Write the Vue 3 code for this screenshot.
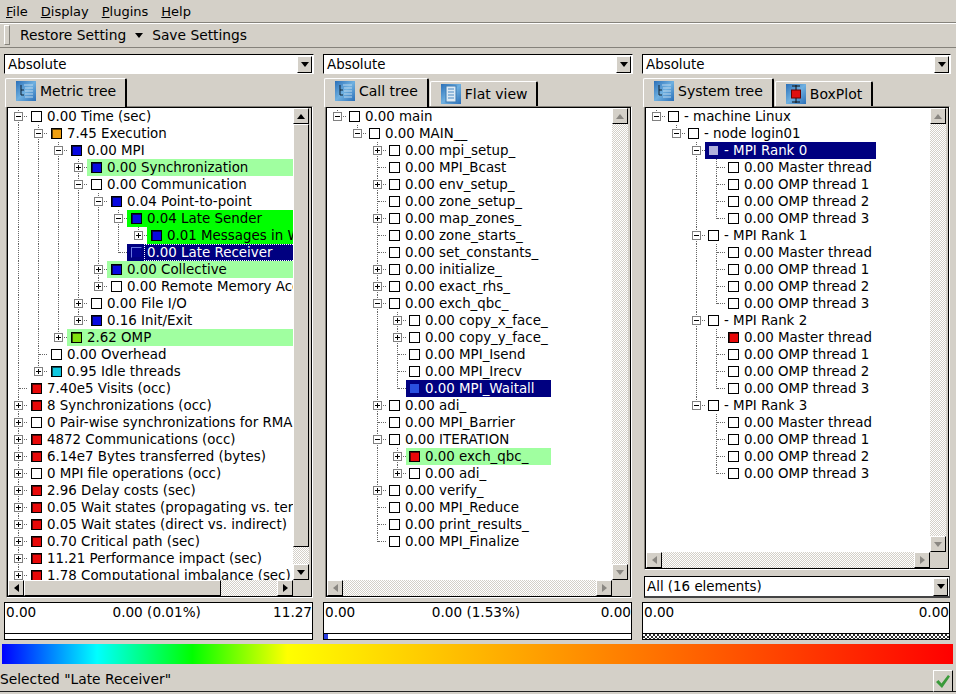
<template>
  <div class="app">
    <div class="menubar">
      <span class="menu-item" v-for="m in menus" :key="m"><u>{{ m[0] }}</u>{{ m.slice(1) }}</span>
    </div>
    <div class="toolbar">
      <div class="grip"></div>
      <span class="tool">Restore Setting</span>
      <span class="arrow down tool-arrow"></span>
      <span class="tool">Save Settings</span>
    </div>

    <div class="panes">
      <div class="pane" v-for="p in panels" :key="p.tabs[0].label">
        <div class="combo">
          <span>Absolute</span>
          <div class="btn combo-btn"><span class="arrow down"></span></div>
        </div>

        <div class="tabs">
          <div
            class="tab"
            :class="{ active: i === 0 }"
            v-for="(t, i) in p.tabs"
            :key="t.label"
          >
            <svg class="tab-icon" width="20" height="20" viewBox="0 0 20 20">
              <defs>
                <linearGradient :id="t.icon + '-bg'" x1="0" y1="0" x2="1" y2="1">
                  <stop offset="0" stop-color="#2a6fb8" />
                  <stop offset="0.5" stop-color="#6fb0e0" />
                  <stop offset="1" stop-color="#2a6fb8" />
                </linearGradient>
              </defs>
              <rect width="20" height="20" :fill="`url(#${t.icon}-bg)`" />
              <template v-if="t.icon === 'tree'">
                <path d="M5 4v10M5 9h3M5 14h3" stroke="#123" fill="none" />
                <path d="M8 4h9M9 7h8M9 10h8M9 13h8M9 16h8" stroke="#bcd8ee" fill="none" />
              </template>
              <template v-if="t.icon === 'flat'">
                <rect x="5" y="2" width="10" height="16" fill="#dceaf5" stroke="#3a78b0" />
                <path d="M7 5h6M7 8h6M7 11h6M7 14h6" stroke="#4a88c0" />
              </template>
              <template v-if="t.icon === 'box'">
                <path d="M10 1v18M6 2h8M6 18h8" stroke="#111" fill="none" />
                <rect x="5.5" y="6" width="9" height="8" fill="#e01010" stroke="#600" />
              </template>
            </svg>
            <span>{{ t.label }}</span>
          </div>
        </div>

        <div class="frame">
          <div class="viewport">
            <div class="row" v-for="(r, i) in p.rows" :key="i">
              <div class="cell" :class="c" v-for="(c, j) in r.cells" :key="j">
                <i class="exp" :class="r.exp" v-if="r.exp && j === r.cells.length - 1"></i>
              </div>
              <div
                class="label"
                :class="r.mark"
                :style="r.w ? { flex: `0 0 ${r.w}px` } : null"
              >
                <i class="box" :class="r.color"></i>
                <span class="text">{{ r.text }}</span>
              </div>
            </div>
          </div>
          <div class="vbar" :class="{ off: !p.vThumb }">
            <div class="btn"><span class="arrow up"></span></div>
            <div class="track">
              <div class="thumb" v-if="p.vThumb" :style="{ height: p.vThumb + 'px' }"></div>
            </div>
            <div class="btn"><span class="arrow down"></span></div>
          </div>
          <div class="hbar" :class="{ off: !p.hThumb }">
            <div class="btn"><span class="arrow left"></span></div>
            <div class="track">
              <div class="thumb" v-if="p.hThumb" :style="{ width: p.hThumb + 'px' }"></div>
            </div>
            <div class="btn"><span class="arrow right"></span></div>
          </div>
          <div class="corner"></div>
        </div>

        <div class="combo filter" v-if="p.filter">
          <span>{{ p.filter }}</span>
          <div class="btn combo-btn"><span class="arrow down"></span></div>
        </div>

        <div class="value">
          <div class="nums">
            <span v-for="(v, i) in p.values" :key="i" :class="{ shift: p.shift && i === 1 }">{{ v }}</span>
          </div>
          <div class="strip" :class="p.strip"></div>
        </div>
      </div>
    </div>

    <div class="spectrum"></div>

    <div class="status">
      <span>Selected "Late Receiver"</span>
      <div class="check">
        <svg width="16" height="16" viewBox="0 0 16 16">
          <path d="M1 9l2.5-2 3 3.5L13 2l2 1.5L7 15z" fill="#3a9a3a" />
        </svg>
      </div>
    </div>
  </div>
</template>

<script setup>
const menus = ["File", "Display", "Plugins", "Help"];

// turn the nested tree into flat rows, each with its guide line cells
const flatten = (nodes, guides = [], top = true) => {
  let out = [];
  nodes.forEach((n, i) => {
    const last = i === nodes.length - 1;
    let own = last ? "ell" : "tee";
    if (top && i === 0) own = last ? "stub" : "start";
    out.push({
      ...n,
      cells: [...guides, own],
      exp: n.kids ? "minus" : n.more ? "plus" : null,
    });
    if (n.kids) {
      out = out.concat(flatten(n.kids, [...guides, last ? "blank" : "pass"], false));
    }
  });
  return out;
};

const leafs = (list) => list.map((text) => ({ text }));
const plus = (text, color, mark) => ({ text, color, mark, more: true });

const metricTree = [
  {
    text: "0.00 Time (sec)",
    kids: [
      {
        text: "7.45 Execution",
        color: "orange",
        kids: [
          {
            text: "0.00 MPI",
            color: "blue",
            kids: [
              plus("0.00 Synchronization", "blue", "soft"),
              {
                text: "0.00 Communication",
                kids: [
                  {
                    text: "0.04 Point-to-point",
                    color: "blue",
                    kids: [
                      {
                        text: "0.04 Late Sender",
                        color: "blue",
                        mark: "hot",
                        kids: [plus("0.01 Messages in Wrong Order", "blue", "hot")],
                      },
                      { text: "0.00 Late Receiver", color: "sel-a", mark: "sel focus" },
                    ],
                  },
                  plus("0.00 Collective", "blue", "soft"),
                  plus("0.00 Remote Memory Access"),
                ],
              },
              plus("0.00 File I/O"),
              plus("0.16 Init/Exit", "blue"),
            ],
          },
          plus("2.62 OMP", "lime", "soft"),
        ],
      },
      { text: "0.00 Overhead" },
      plus("0.95 Idle threads", "cyan"),
    ],
  },
  { text: "7.40e5 Visits (occ)", color: "red" },
  plus("8 Synchronizations (occ)", "red"),
  plus("0 Pair-wise synchronizations for RMA (occ)"),
  plus("4872 Communications (occ)", "red"),
  plus("6.14e7 Bytes transferred (bytes)", "red"),
  plus("0 MPI file operations (occ)"),
  plus("2.96 Delay costs (sec)", "red"),
  plus("0.05 Wait states (propagating vs. terminal)", "red"),
  plus("0.05 Wait states (direct vs. indirect)", "red"),
  plus("0.70 Critical path (sec)", "red"),
  plus("11.21 Performance impact (sec)", "red"),
  plus("1.78 Computational imbalance (sec)", "red"),
];

const callTree = [
  {
    text: "0.00 main",
    kids: [
      {
        text: "0.00 MAIN__",
        kids: [
          plus("0.00 mpi_setup_"),
          { text: "0.00 MPI_Bcast" },
          plus("0.00 env_setup_"),
          { text: "0.00 zone_setup_" },
          plus("0.00 map_zones_"),
          { text: "0.00 zone_starts_" },
          { text: "0.00 set_constants_" },
          plus("0.00 initialize_"),
          plus("0.00 exact_rhs_"),
          {
            text: "0.00 exch_qbc_",
            kids: [
              plus("0.00 copy_x_face_"),
              plus("0.00 copy_y_face_"),
              { text: "0.00 MPI_Isend" },
              { text: "0.00 MPI_Irecv" },
              { text: "0.00 MPI_Waitall", color: "sel-b", mark: "sel", w: 145 },
            ],
          },
          plus("0.00 adi_"),
          { text: "0.00 MPI_Barrier" },
          {
            text: "0.00 ITERATION",
            kids: [
              { ...plus("0.00 exch_qbc_", "red", "soft"), w: 145 },
              plus("0.00 adi_"),
            ],
          },
          plus("0.00 verify_"),
          { text: "0.00 MPI_Reduce" },
          { text: "0.00 print_results_" },
          { text: "0.00 MPI_Finalize" },
        ],
      },
    ],
  },
];

const threads = ["0.00 Master thread", "0.00 OMP thread 1", "0.00 OMP thread 2", "0.00 OMP thread 3"];

const systemTree = [
  {
    text: "- machine Linux",
    kids: [
      {
        text: "- node login01",
        kids: [
          { text: "- MPI Rank 0", color: "sel-c", mark: "sel", w: 171, kids: leafs(threads) },
          { text: "- MPI Rank 1", kids: leafs(threads) },
          {
            text: "- MPI Rank 2",
            kids: [{ text: threads[0], color: "red" }, ...leafs(threads.slice(1))],
          },
          { text: "- MPI Rank 3", kids: leafs(threads) },
        ],
      },
    ],
  },
];

const panels = [
  {
    tabs: [{ label: "Metric tree", icon: "tree" }],
    rows: flatten(metricTree),
    vThumb: 423,
    hThumb: 197,
    values: ["0.00", "0.00 (0.01%)", "11.27"],
    strip: "",
  },
  {
    tabs: [
      { label: "Call tree", icon: "tree" },
      { label: "Flat view", icon: "flat" },
    ],
    rows: flatten(callTree),
    values: ["0.00", "0.00 (1.53%)", "0.00"],
    strip: "marker",
    shift: true,
  },
  {
    tabs: [
      { label: "System tree", icon: "tree" },
      { label: "BoxPlot", icon: "box" },
    ],
    rows: flatten(systemTree),
    filter: "All (16 elements)",
    values: ["0.00", "0.00"],
    strip: "hatch",
  },
];
</script>

<style>
html,
body {
  margin: 0;
  background: #d4d0c8;
}
</style>

<style scoped>
.app {
  width: 956px;
  height: 694px;
  display: flex;
  flex-direction: column;
  overflow: hidden;
  background: #d4d0c8;
  color: #000;
  font-family: "DejaVu Sans", sans-serif;
  font-size: 13.4px;
}
u {
  text-decoration: underline;
}

.menubar {
  height: 22px;
  display: flex;
  flex: none;
  align-items: center;
  padding-left: 6px;
  gap: 13px;
  box-sizing: border-box;
  font-size: 13px;
}
.toolbar {
  height: 26px;
  flex: none;
  box-sizing: border-box;
  display: flex;
  align-items: center;
  padding-left: 4px;
  font-size: 13.8px;
  border-top: 1px solid #85827b;
  border-bottom: 1px solid #85827b;
  box-shadow: inset 0 1px 0 #fff;
}
.grip {
  width: 4px;
  height: 18px;
  border: 1px solid #85827b;
  border-left-color: #fff;
  border-top-color: #fff;
  margin-right: 10px;
}
.tool-arrow {
  margin: 0 9px 0 9px;
}

.panes {
  flex: none;
  height: 596px;
  box-sizing: border-box;
  padding: 6px 0 4px 4px;
  display: grid;
  grid-template-columns: 310px 310px 309px;
  column-gap: 9px;
}
.pane {
  display: flex;
  flex-direction: column;
  min-width: 0;
  min-height: 0;
}

.combo {
  height: 20px;
  flex: none;
  box-sizing: border-box;
  border: 1px solid;
  border-color: #000 #fff #fff #000;
  outline: 1px solid #d4d0c8;
  background: #fff;
  display: flex;
  align-items: center;
  justify-content: space-between;
  padding-left: 3px;
}
.combo-btn {
  width: 15px;
  height: 17px;
  margin-right: 1px;
}
.filter {
  height: 22px;
  margin: 6px 1px 0 2px;
  border-color: #000 #444 #444 #000;
  border-width: 1px 1px 2px 1px;
  padding-left: 2px;
}
.filter .combo-btn {
  height: 18px;
}

.btn {
  flex: none;
  box-sizing: border-box;
  background: #d4d0c8;
  border: 1px solid;
  border-color: #fff #000 #000 #fff;
  display: flex;
  align-items: center;
  justify-content: center;
}
.arrow {
  width: 0;
  height: 0;
  display: block;
  border: 4px solid transparent;
}
.arrow.down {
  border-top: 5px solid #000;
  border-bottom: 0;
}
.arrow.up {
  border-bottom: 5px solid #000;
  border-top: 0;
}
.arrow.left {
  border-right: 5px solid #000;
  border-left: 0;
}
.arrow.right {
  border-left: 5px solid #000;
  border-right: 0;
}
.off .arrow {
  opacity: 0.35;
}

.tabs {
  height: 28px;
  flex: none;
  margin-top: 4px;
  padding-left: 1px;
  display: flex;
  align-items: flex-end;
  gap: 1px;
  position: relative;
  z-index: 1;
  font-size: 14px;
}
.tab {
  height: 25px;
  box-sizing: border-box;
  display: flex;
  align-items: center;
  gap: 4px;
  padding: 0 9px 0 10px;
  border-top: 1px solid #fff;
  border-left: 1px solid #fff;
  border-right: 2px solid #000;
  border-radius: 2px 2px 0 0;
}
.tab.active {
  height: 29px;
  margin-bottom: -1px;
  background: #d4d0c8;
  padding-bottom: 4px;
}
.tab-icon {
  flex: none;
}

.frame {
  flex: 1;
  min-height: 0;
  margin: 0 1px 0 2px;
  box-sizing: border-box;
  border: 1px solid;
  border-color: #85827b #fff #fff #85827b;
  box-shadow: inset 0 0 0 1px #000;
  padding: 1px;
  background: #d4d0c8;
  display: grid;
  grid-template-columns: 1fr 18px;
  grid-template-rows: 1fr 16px;
}
.viewport {
  background: #fff;
  overflow: hidden;
  min-width: 0;
  min-height: 0;
}
.row {
  height: 17px;
  display: flex;
  white-space: nowrap;
}
.cell {
  width: 20px;
  height: 17px;
  flex: none;
  position: relative;
}
.pass::before,
.tee::before,
.ell::before,
.start::before,
.stub::before {
  content: "";
  position: absolute;
  left: 10px;
  top: 0;
  height: 100%;
  border-left: 1px dotted #666;
}
.ell::before {
  height: 9px;
}
.stub::before {
  height: 9px;
  top: 2px;
}
.start::before {
  top: 2px;
  height: 15px;
}
.tee::after,
.ell::after,
.start::after,
.stub::after {
  content: "";
  position: absolute;
  left: 11px;
  top: 8px;
  width: 8px;
  border-top: 1px dotted #666;
}
.exp {
  position: absolute;
  left: 6px;
  top: 4px;
  width: 9px;
  height: 9px;
  box-sizing: border-box;
  border: 1px solid #808080;
  background: #fff;
  z-index: 1;
}
.exp::before,
.plus::after {
  content: "";
  position: absolute;
  background: #000;
}
.exp::before {
  left: 1px;
  top: 3px;
  width: 5px;
  height: 1px;
}
.plus::after {
  left: 3px;
  top: 1px;
  width: 1px;
  height: 5px;
}

.label {
  flex: 1;
  min-width: 0;
  display: flex;
  align-items: center;
  margin-left: -1px;
  padding-left: 3px;
  box-sizing: border-box;
  position: relative;
  height: 17px;
  overflow: hidden;
}
.pane:first-child .label {
  padding-left: 4px;
}
.soft {
  background: #a0ffa0;
}
.hot {
  background: #00ff00;
}
.sel {
  background: #000080;
  color: #fff;
}
.box {
  width: 11px;
  height: 11px;
  flex: none;
  box-sizing: border-box;
  border: 1px solid #000;
  margin-right: 5px;
  background: #fff;
}
.blue,
.red,
.orange,
.lime,
.cyan {
  box-shadow: inset 1px 1px 0 rgba(0, 0, 0, 0.6);
}
.blue {
  background: #0808e0;
}
.red {
  background: #e80808;
}
.orange {
  background: #f0a010;
}
.lime {
  background: #80e010;
}
.cyan {
  background: #10c8e0;
}
.sel-a {
  background: #000090;
  border-color: #6a78e0 #000080 #000080 #6a78e0;
}
.sel-b {
  background: #2a50e0;
  border-color: #000080;
}
.sel-c {
  background: #b0b0dc;
  border-color: #000080;
}
.text {
  line-height: 17px;
}
.focus .text {
  box-sizing: border-box;
  height: 17px;
  line-height: 15px;
  flex: 1;
  margin-left: -3px;
  padding-left: 2px;
  border: 1px dotted #fff;
  border-right: 0;
}

.vbar {
  margin-right: 2px;
  display: flex;
  flex-direction: column;
}
.vbar .btn {
  height: 16px;
  width: 16px;
}
.hbar {
  display: flex;
  height: 16px;
}
.hbar .btn {
  width: 16px;
  height: 16px;
}
.track {
  flex: 1;
  min-width: 0;
  min-height: 0;
  background: repeating-conic-gradient(#d4d0c8 0 25%, #fff 0 50%) 0 0 / 2px 2px;
}
.thumb {
  box-sizing: border-box;
  background: #d4d0c8;
  height: 100%;
  border: 1px solid;
  border-color: #fff #000 #000 #fff;
}

.value {
  height: 38px;
  flex: none;
  margin: 4px 1px 0 0;
  box-sizing: border-box;
  border: 1px solid #000;
  background: #fff;
  display: flex;
  flex-direction: column;
}
.nums {
  height: 31px;
  flex: none;
  box-sizing: border-box;
  padding: 1px 0 0 1px;
  display: flex;
  justify-content: space-between;
  border-bottom: 1px solid #000;
  line-height: 17px;
  font-size: 13.6px;
}
.nums span:nth-child(2) {
  margin-left: 4px;
}
.shift {
  margin-right: 8px;
}
.strip {
  flex: 1;
  position: relative;
}
.marker::before {
  content: "";
  position: absolute;
  left: 0;
  top: 0;
  width: 4px;
  height: 100%;
  background: #2a3fe0;
}
.hatch {
  background: repeating-conic-gradient(#333 0 25%, #fff 0 50%) 0 0 / 4px 4px;
}

.spectrum {
  height: 20px;
  flex: none;
  margin: 0 3px 0 2px;
  background: linear-gradient(
    to right,
    #0000ff 0,
    #00ffff 10%,
    #00ff00 20%,
    #ffff00 30%,
    #ff0000 100%
  );
}

.status {
  height: 28px;
  flex: none;
  box-sizing: border-box;
  display: flex;
  align-items: center;
  justify-content: space-between;
  padding: 3px 3px 0 0;
  font-size: 13.8px;
  border-bottom: 1px solid #222;
}
.check {
  width: 20px;
  height: 22px;
  margin-top: 3px;
  box-sizing: border-box;
  border: 1px solid;
  border-color: #fff #000 transparent #fff;
  display: flex;
  align-items: center;
  justify-content: center;
}
</style>
